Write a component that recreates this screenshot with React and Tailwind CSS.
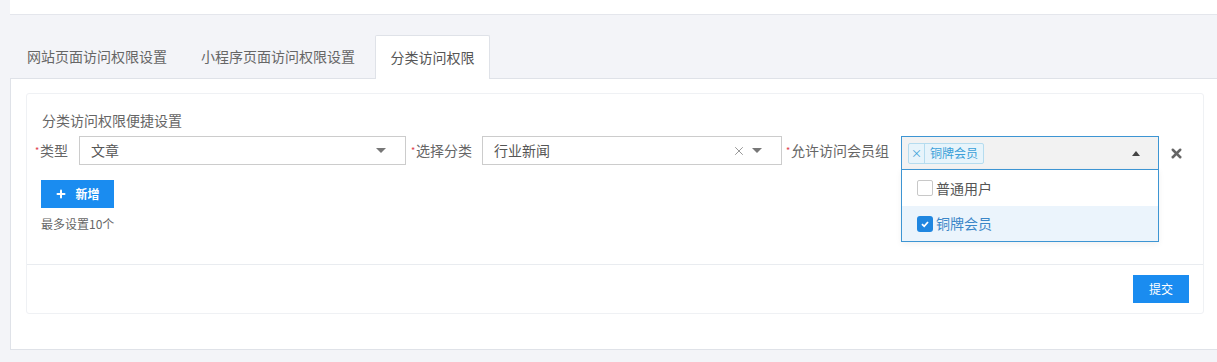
import { Plus, X } from 'lucide-react'

const font = { fontFamily: '"Noto Sans CJK SC", "Noto Sans", sans-serif' }

function Caret({ up }) {
    return (
        <span
            className={
                up
                    ? 'w-0 h-0 border-x-[4px] border-x-transparent border-b-[5px] border-b-[#444]'
                    : 'w-0 h-0 border-x-[5px] border-x-transparent border-t-[5px] border-t-[#777]'
            }
        />
    )
}

function Label({ children }) {
    return (
        <div className="h-[29px] flex items-center text-[14px] text-[#666] whitespace-nowrap">
            <span className="text-[#e0404a] text-[9px] w-[5px] leading-none">*</span>
            {children}
        </div>
    )
}

function Select({ value, width, clearable }) {
    return (
        <div
            className="h-[29px] border border-[#cccccc] bg-white flex items-center pl-[11px] pr-[19px] text-[14px] text-[#555]"
            style={{ width }}
        >
            <span className="flex-1">{value}</span>
            {clearable && <X size={14} strokeWidth={1.3} className="text-[#777] mr-[6px]" />}
            <Caret />
        </div>
    )
}

function Checkbox({ checked }) {
    if (checked) {
        return (
            <span className="w-[16px] h-[16px] rounded-[3px] bg-[#1f86e0] flex items-center justify-center">
                <svg width="10" height="10" viewBox="0 0 10 10">
                    <path d="M2 5.2 L4.2 7.3 L8 3" fill="none" stroke="white" strokeWidth="1.8" />
                </svg>
            </span>
        )
    }
    return <span className="w-[16px] h-[16px] rounded-[2px] border border-[#c8c8c8] bg-white" />
}

export default function App() {
    return (
        <div className="w-[1217px] h-[362px] bg-[#f3f4f8] pl-[10px] overflow-hidden" style={font}>
            <div className="h-[15px] bg-white border-b border-[#e4e6ec]" />

            <div className="mt-[20px] flex h-[43px] items-stretch text-[14px] text-[#666]">
                <div className="w-[173px] flex items-center pl-[17px]">网站页面访问权限设置</div>
                <div className="w-[192px] flex items-center pl-[18px]">小程序页面访问权限设置</div>
                <div className="w-[115px] flex items-center justify-center bg-white border border-b-0 border-[#dfe2e8] rounded-t-[2px] relative z-10 h-[44px] text-[#555]">
                    分类访问权限
                </div>
            </div>

            <div className="bg-white border-t border-l border-b border-[#dfe2e8] h-[272px] pt-[14px] pl-[15px] pr-[13px]">
                <div className="border border-[#eff1f4] rounded-[3px] h-[221px] flex flex-col">
                    <div className="h-[171px] border-b border-[#e9ecf0] pt-[16px]">
                        <div className="pl-[15px] text-[14px] text-[#666] leading-[20px]">分类访问权限便捷设置</div>
                        <div className="mt-[6px] pl-[8px] flex items-start">
                            <Label>类型</Label>
                            <div className="ml-[11px]">
                                <Select value="文章" width={327} />
                            </div>
                            <div className="ml-[5px]">
                                <Label>选择分类</Label>
                            </div>
                            <div className="ml-[10px]">
                                <Select value="行业新闻" width={300} clearable />
                            </div>
                            <div className="ml-[4px]">
                                <Label>允许访问会员组</Label>
                            </div>
                            <div className="ml-[12px] w-[258px] relative">
                                <div className="h-[34px] border border-[#3d95d3] bg-[#f2f2f2] flex items-center pl-[6px] pr-[18px]">
                                    <div className="h-[21px] border border-[#b5dcef] bg-[#e7f4fb] flex items-center text-[12px] text-[#3a9fd8] rounded-[2px]">
                                        <span className="w-[16px] flex justify-center text-[11px] border-r border-[#b5dcef] h-full items-center">×</span>
                                        <span className="px-[5px]">铜牌会员</span>
                                    </div>
                                    <div className="flex-1" />
                                    <Caret up />
                                </div>
                                <div className="absolute left-0 right-0 top-[33px] border border-[#3d95d3] bg-white shadow-[0_2px_6px_rgba(0,0,0,0.06)] text-[14px] text-[#555]">
                                    <div className="h-[36px] flex items-center pl-[15px] gap-[3px]">
                                        <Checkbox />
                                        普通用户
                                    </div>
                                    <div className="h-[35px] flex items-center pl-[15px] gap-[3px] bg-[#ebf4fc] text-[#3a86c8]">
                                        <Checkbox checked />
                                        铜牌会员
                                    </div>
                                </div>
                            </div>
                            <div className="h-[34px] flex items-center ml-[10px]">
                                <X size={15} strokeWidth={4} className="text-[#666]" />
                            </div>
                        </div>
                        <div className="pl-[14px] mt-[10px]">
                            <button className="h-[28px] w-[73px] bg-[#1a8cf0] text-white text-[12px] font-bold flex items-center justify-center gap-[8px]">
                                <Plus size={12} strokeWidth={4} />
                                新增
                            </button>
                            <div className="mt-[7px] text-[12px] text-[#666]">最多设置10个</div>
                        </div>
                    </div>
                    <div className="flex-1 flex justify-end items-start pt-[10px] pr-[14px]">
                        <button className="h-[28px] w-[56px] bg-[#1a8cf0] text-white text-[12px]">提交</button>
                    </div>
                </div>
            </div>
        </div>
    )
}
